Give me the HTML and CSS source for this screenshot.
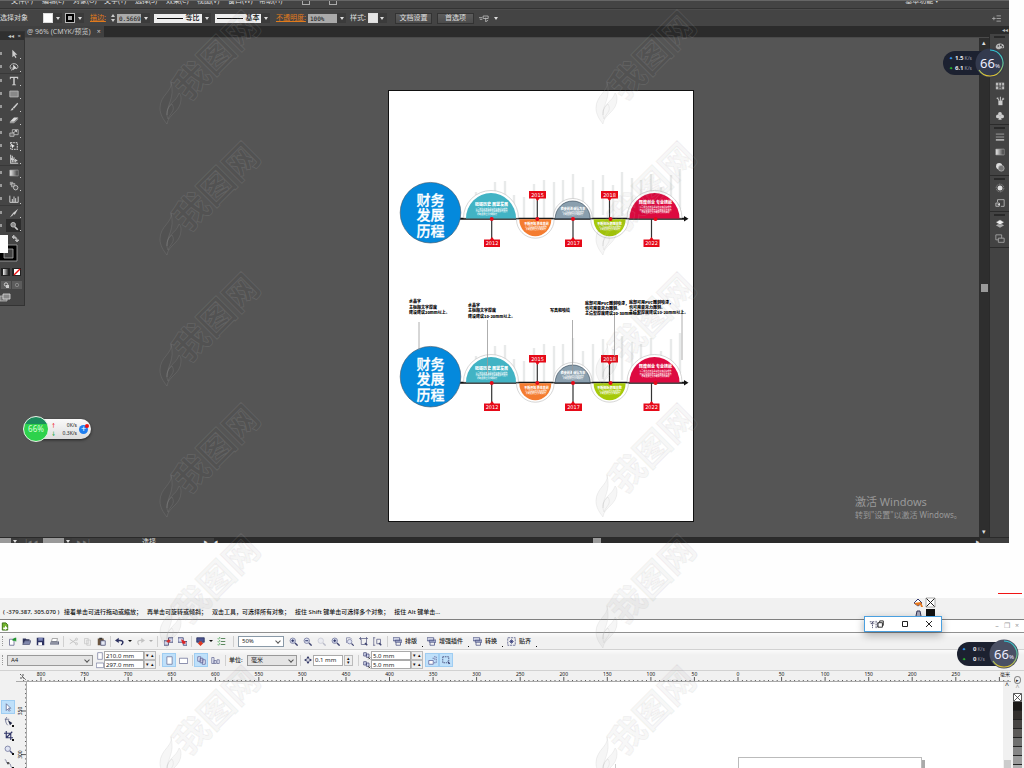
FILE: index.html
```html
<!DOCTYPE html>
<html lang="zh-CN">
<head>
<meta charset="utf-8">
<title>财务发展历程</title>
<link rel="stylesheet" href="styles.css">
</head>
<body>
<svg class="defs" aria-hidden="true">
  <defs>
    <linearGradient id="g-gray"><stop offset="0" stop-color="#eee"/><stop offset="1" stop-color="#333"/></linearGradient>
    <linearGradient id="g-ring" x1="0" y1="0" x2="0" y2="1"><stop offset="0" stop-color="#2fc6d8"/><stop offset=".6" stop-color="#6cc08a"/><stop offset="1" stop-color="#e8c52c"/></linearGradient>
    <symbol id="i-arrow" viewBox="0 0 12 12"><path d="M4 1v9l2-2 2 3 1-1-2-3h3z" fill="#ccc"/></symbol>
    <symbol id="i-lasso" viewBox="0 0 12 12"><path d="M3 9C0 7 1 2 6 2s6 5 3 6M3 7c2-1 2 3 0 3" fill="none" stroke="#bbb" stroke-width="1.2"/><path d="M5 3v7l2-2h3z" fill="#ddd"/></symbol>
    <symbol id="i-type" viewBox="0 0 12 12"><path d="M1 1h10v3h-.8L9.600 2.300H6.900v7.700l1.600.5V11h-5v-.5L5.100 10V2.300H2.400L1.800 4H1z" fill="#ccc"/></symbol>
    <symbol id="i-rect" viewBox="0 0 12 12"><path d="M1 2.500h10v7H1z" fill="#888" stroke="#bbb"/></symbol>
    <symbol id="i-brush" viewBox="0 0 12 12"><path d="M10 1 11 2 6 8 4.500 6.500zM4 7l1.500 1.500C4 11 2 10 1 10c2 0 2-2 3-3z" fill="#ccc"/></symbol>
    <symbol id="i-eraser" viewBox="0 0 12 12"><path d="M1 8 6 3h5L6 8z" fill="#ddd"/><path d="M1 8h5v2H1zM6 8l5-5v2L6 10z" fill="#999"/></symbol>
    <symbol id="i-scale" viewBox="0 0 12 12"><path d="M4 2h7v6H4z" fill="none" stroke="#bbb"/><path d="M1 6h5v4H1z" fill="#666" stroke="#bbb"/><path d="m5 6 4-3M7 3h2v2" stroke="#ddd" fill="none"/></symbol>
    <symbol id="i-free" viewBox="0 0 12 12"><path d="M2 2h8v8H2z" fill="none" stroke="#bbb" stroke-width="1.500" stroke-dasharray="2 1"/><path d="m2 3 5 3-2 1-1 2z" fill="#eee"/></symbol>
    <symbol id="i-persp" viewBox="0 0 12 12"><path d="M2 1v10h9M4 2v8M6 4v6M8 6v4M2 5l8 3" fill="none" stroke="#ccc" stroke-width="1.300"/></symbol>
    <symbol id="i-grad" viewBox="0 0 12 12"><path d="M1 2.500h10v7H1z" fill="url(#g-gray)" stroke="#aaa" stroke-width=".7"/></symbol>
    <symbol id="i-blend" viewBox="0 0 12 12"><path d="M1 1h4v4H1z" fill="#999"/><path d="M3 3h4v4H3z" fill="#777" stroke="#bbb" stroke-width=".8"/><circle cx="8" cy="8" r="2.700" fill="#555" stroke="#ccc"/></symbol>
    <symbol id="i-graph" viewBox="0 0 12 12"><path d="M1 2v8h10V3M4 10V6M6 10V3M8 10V5" fill="none" stroke="#ccc" stroke-width="1.200"/></symbol>
    <symbol id="i-slice" viewBox="0 0 12 12"><path d="M11 1 7 8 4 6.500zM4 7l1.500 1L1 11.500z" fill="#ccc"/></symbol>
    <symbol id="i-zoomt" viewBox="0 0 12 12"><circle cx="5" cy="4.500" r="2.800" fill="#888" stroke="#ccc"/><path d="m7 7 3.500 3.500" stroke="#ccc" stroke-width="2"/></symbol>
    <symbol id="i-color" viewBox="0 0 12 12"><path d="M1 8c-1-6 10-7 10-1 0 3-3 1-4 2s-4 2-6-1z" fill="#bbb"/><circle cx="4" cy="6" r="1" fill="#444"/><circle cx="7" cy="5" r="1.200" fill="#444"/><circle cx="9" cy="7" r="1" fill="#444"/></symbol>
    <symbol id="i-swatch" viewBox="0 0 12 12"><path d="M1 2h10v8H1z" fill="#bbb"/><path d="M1 6h10M4.500 2v8M8 2v8" stroke="#444"/><path d="M5 7h2v2H5z" fill="#555"/></symbol>
    <symbol id="i-pots" viewBox="0 0 12 12"><path d="M4 6h5v5H4z" fill="#ccc"/><path d="M5 6 3 2M6.500 6V1M8 6l2-4M2 3l2-1M9 3l2 1" stroke="#bbb" stroke-width="1.300"/></symbol>
    <symbol id="i-club" viewBox="0 0 12 12"><circle cx="6" cy="3.500" r="2.300" fill="#ccc"/><circle cx="3.500" cy="6.500" r="2.300" fill="#ccc"/><circle cx="8.500" cy="6.500" r="2.300" fill="#ccc"/><path d="M5.300 6h1.400L8 10.500H4z" fill="#ccc"/></symbol>
    <symbol id="i-lines" viewBox="0 0 12 12"><path d="M1 2.500h10M1 6h10" stroke="#aaa"/><path d="M1 9.500h10" stroke="#ccc" stroke-width="1.600"/></symbol>
    <symbol id="i-trans" viewBox="0 0 12 12"><circle cx="5" cy="5" r="3.700" fill="#ddd"/><circle cx="7.500" cy="7.500" r="3.500" fill="#777" stroke="#bbb" stroke-width=".8"/></symbol>
    <symbol id="i-appear" viewBox="0 0 12 12"><circle cx="6" cy="6" r="3" fill="#ddd"/><circle cx="6" cy="6" r="4.600" fill="none" stroke="#aaa" stroke-dasharray="1 1"/></symbol>
    <symbol id="i-style" viewBox="0 0 12 12"><path d="M3 5V2h8v8H7" fill="none" stroke="#bbb"/><path d="M1 6h4v4H1z" fill="#555" stroke="#bbb"/><path d="m3 8 3-2v3z" fill="#ddd"/></symbol>
    <symbol id="i-layers" viewBox="0 0 12 12"><path d="m6 5 5 2.500L6 10.500 1 7.500z" fill="#aaa"/><path d="m6 1 5 3-5 3-5-3z" fill="#eee" stroke="#444" stroke-width=".5"/></symbol>
    <symbol id="i-boards" viewBox="0 0 12 12"><path d="M1 1h7v6H1z" fill="none" stroke="#aaa"/><path d="M4 5h7v5H4z" fill="#444" stroke="#aaa"/></symbol>

    <symbol id="c-new" viewBox="0 0 12 12"><path d="M2 3h6v8H2z" fill="#fff" stroke="#5b5f86"/><path d="M8 3V2m2 3h1M6 4h4V1" stroke="#1c9a2a" stroke-width="2"/></symbol>
    <symbol id="c-open" viewBox="0 0 12 12"><path d="M1 10V2h4l1 1h4v2H4z" fill="#2d3157"/><path d="M4 5h8l-2 5H1z" fill="#8289ad" stroke="#2d3157" stroke-width=".7"/></symbol>
    <symbol id="c-save" viewBox="0 0 12 12"><path d="M1 1h10v10H1z" fill="#2c3160"/><path d="M3 1h6v4H3z" fill="#7c86b8"/><path d="M3 7h5v4H3z" fill="#fff"/></symbol>
    <symbol id="c-print" viewBox="0 0 12 12"><path d="M3 2h7L9 6H2z" fill="#fff" stroke="#666" stroke-width=".7"/><path d="M1 6h11v4H0z" fill="#555b75"/><path d="M1 8h10" stroke="#eee"/></symbol>
    <symbol id="c-cut" viewBox="0 0 12 12"><path d="m1 3 9 6M1 9l9-6" stroke="#c4c4c4" stroke-width="1.300"/><circle cx="10" cy="3" r="1.500" fill="none" stroke="#c4c4c4"/><circle cx="10" cy="9" r="1.500" fill="none" stroke="#c4c4c4"/></symbol>
    <symbol id="c-copy" viewBox="0 0 12 12"><path d="M2 2h5v7H2zM5 4h5v7H5z" fill="#eee" stroke="#c8c8c8"/></symbol>
    <symbol id="c-paste" viewBox="0 0 12 12"><path d="M1 2h8v9H1z" fill="#6b553f"/><path d="M3 1h4v2H3z" fill="#333"/><path d="M5 5h6v6H5z" fill="#e4e8f4" stroke="#444a70"/></symbol>
    <symbol id="c-undo" viewBox="0 0 12 12"><path d="M3 4.500h4c5 0 4 5 1 6" fill="none" stroke="#2c3160" stroke-width="2"/><path d="M0 4.500 5 1v7z" fill="#2c3160"/></symbol>
    <symbol id="c-redo" viewBox="0 0 12 12"><path d="M9 4.500H6c-5 0-4 4-2 6" fill="none" stroke="#c4c4c4" stroke-width="1.500"/><path d="M12 4.500 7 1v7z" fill="#c4c4c4"/></symbol>
    <symbol id="c-import" viewBox="0 0 12 12"><path d="M6 1h6v6H6zM0 5h6v6H0z" fill="#d8dcf0" stroke="#33386a"/><path d="m3 6 3-3 3 2-3 3z" fill="#d22"/></symbol>
    <symbol id="c-export" viewBox="0 0 12 12"><path d="M0 1h7v6H0zM7 6h5v5H7z" fill="#d8dcf0" stroke="#33386a"/><path d="m4 3 6 3v3H6z" fill="#d22"/></symbol>
    <symbol id="c-launch" viewBox="0 0 12 12"><path d="M1 1h10v6H1z" fill="#4c5490" stroke="#222a58"/><path d="M4 6h4v2h2l-4 4-4-4h2z" fill="#e23a22"/></symbol>
    <symbol id="c-list" viewBox="0 0 12 12"><path d="M5 2h6M5 6h6M5 10h6" stroke="#5d8a60" stroke-width="1.500"/><path d="m1 2 1 1 2-3M1 6l1 1 2-3M1 10l1 1 2-3" stroke="#3da048" fill="none"/></symbol>
    <symbol id="c-mag" viewBox="0 0 12 12"><circle cx="5" cy="5" r="3.600" fill="#dfe3f3" stroke="#6a6f96"/><path d="m8 8 3.500 3.500" stroke="#3f4470" stroke-width="1.800"/></symbol>
    <symbol id="c-plus" viewBox="0 0 12 12"><use href="#c-mag"/><path d="M3 5h4M5 3v4" stroke="#222a60" stroke-width="1.300"/></symbol>
    <symbol id="c-minus" viewBox="0 0 12 12"><use href="#c-mag"/><path d="M3 5h4" stroke="#222a60" stroke-width="1.300"/></symbol>
    <symbol id="c-page" viewBox="0 0 12 12"><path d="M2 8V1h5l2 2" fill="none" stroke="#7c80a4"/><use href="#c-mag" x="2" y="2" width="10" height="10"/></symbol>
    <symbol id="c-fit" viewBox="0 0 12 12"><path d="M0 2h12M2 0v4M10 0v4M3 3v7h7V4" fill="none" stroke="#5b5f86"/><path d="m8 8 3 3" stroke="#3f4470" stroke-width="2"/></symbol>
    <symbol id="c-fith" viewBox="0 0 12 12"><path d="M1 1v10M0 1h3M0 11h3M5 3h5v6H5z" fill="none" stroke="#5b5f86"/><path d="m8 8 3 3" stroke="#3f4470" stroke-width="2"/></symbol>
    <symbol id="c-plug" viewBox="0 0 12 12"><path d="M0 1h9v4H0zM3 4h9v3H3z" fill="#b9bfdd" stroke="#4a5080"/><path d="M4 7v4h6V7" fill="none" stroke="#4a5080"/><path d="M1 2.500h7" stroke="#fff"/></symbol>
    <symbol id="c-snap" viewBox="0 0 12 12"><path d="M1 1h10v10H1z" fill="none" stroke="#4a5080" stroke-dasharray="3 1"/><path d="M6 3v6M3 6h6M4 4l4 4M8 4 4 8" stroke="#333a78"/></symbol>
    <symbol id="c-port" viewBox="0 0 12 12"><path d="M2.500 1h7v10h-7z" fill="#fff" stroke="#6a6f96"/></symbol>
    <symbol id="c-land" viewBox="0 0 12 12"><path d="M.5 3h11v7H.5z" fill="#fff" stroke="#6a6f96"/></symbol>
    <symbol id="c-pages" viewBox="0 0 12 12"><path d="M1 1h4v6H1zM4 3h4v6H4zM7 5h4v6H7z" fill="#e9ecf8" stroke="#5b5f96"/></symbol>
    <symbol id="c-cur" viewBox="0 0 12 12"><path d="M1 2h3v8H1zM4 6h3v4H4zM8 5h3v5H8z" fill="#e9ecf8" stroke="#6a6f96"/></symbol>
    <symbol id="c-nudge" viewBox="0 0 12 12"><path d="m6 0 2 3H4zM6 12 4 9h4zM0 6l3-2v4zM12 6 9 8V4z" fill="#2c3160"/><path d="M4 4h4v4H4z" fill="#fff" stroke="#2c3160"/></symbol>
    <symbol id="c-dup" viewBox="0 0 12 12"><path d="M1 1h4v5H1zM5 3h4v5H5z" fill="#d8dcf0" stroke="#33386a"/><path d="m8 8 3 3m0-3-3 3" stroke="#222"/></symbol>
    <symbol id="c-treat" viewBox="0 0 12 12"><path d="M1 6h6v5H1z" fill="#fff" stroke="#5b5f96"/><path d="M6 3h3v3M8 1h3v8H8" fill="none" stroke="#5b5f96" stroke-dasharray="2 1"/></symbol>
    <symbol id="c-sel" viewBox="0 0 12 12"><path d="M1 1h8v8H1z" fill="none" stroke="#33386a" stroke-dasharray="2 1"/><path d="m7 6 4 4-2 1z" fill="#33386a"/></symbol>
    <symbol id="c-pick" viewBox="0 0 12 12"><path d="M3 1v9l2-2 2 3 1-1-2-3h3z" fill="#fff" stroke="#4a5080" stroke-width=".9"/></symbol>
    <symbol id="c-shape" viewBox="0 0 12 12"><path d="M4 0C1 3 2 8 5 11M1 3h6" fill="none" stroke="#555b80"/><path d="m5 4 6 4-3 3z" fill="#222848"/></symbol>
    <symbol id="c-crop" viewBox="0 0 12 12"><path d="M3 0v9h9M0 3h9v9M3 9l8-8" fill="none" stroke="#33386a" stroke-width="1.500"/></symbol>
    <symbol id="c-free" viewBox="0 0 12 12"><path d="M1 1c4 0 0 5 5 5s1 5 5 5" fill="none" stroke="#666a8a"/><path d="M4 4h3v3H4z" fill="#555"/></symbol>

    <g id="timeline">
      <g fill="none" stroke="#e8eaea" stroke-width="2.400">
        <path d="M476 192v26M485 191v27M495 182v30M505 181v32M514 195v23M524 197v21M534 184v34M544 180v38M554 182v34M563 180v36M573 174v30M583 187v31M593 180v38M603 175v40M613 185v33M622 172v44M632 178v38M641 180v32M651 174v30M661 187v25M671 175v28M680 169v40"/>
      </g>
      <path d="M460 218.700h226" stroke="#111" stroke-width="2"/><path d="m684 216 4.500 2.700-4.500 2.700z" fill="#111"/>
      <circle cx="430.500" cy="212.700" r="30.300" fill="#0489dc" stroke="#456" stroke-width=".6"/>
      <g fill="#fff" stroke="#bbb" stroke-width=".6">
        <path d="M463.500 218a27.500 27.500 0 0 1 55 0z"/><path d="M516.500 219.400a18.800 18.800 0 0 0 37.600 0z"/><path d="M553.200 218a19.500 19.500 0 0 1 39 0z"/><path d="M590.800 219.400a18.800 18.800 0 0 0 37.600 0z"/><path d="M627 218a27.500 27.500 0 0 1 55 0z"/>
      </g>
      <path d="M466 218.500a25 25.500 0 0 1 50 0z" fill="#42b3c4"/>
      <path d="M519.300 219.300a16 17 0 0 0 32 0z" fill="#f47c30"/>
      <path d="M555.200 218.500a17.500 17.500 0 0 1 35 0z" fill="#8a9fae" stroke="#345" stroke-width=".6"/>
      <path d="M593.600 219.300a16 17 0 0 0 32 0z" fill="#a6c90a"/>
      <path d="M629.500 218.500a25 25.500 0 0 1 50 0z" fill="#dd0a40"/>
      <path d="M491.700 219v20M537.300 199v20M573 219v20M609.500 199v20M651.500 219v20" stroke="#333" stroke-width="1.200"/>
      <g fill="#e60a18">
        <circle cx="491.700" cy="219" r="2"/><circle cx="537.300" cy="219" r="2"/><circle cx="573" cy="219" r="2"/><circle cx="610.500" cy="219" r="2"/><circle cx="655.500" cy="219" r="2"/>
        <path d="M484 239.500h6l2-2.500 2 2.500h6v7.500h-16zM565 239.500h6l2-2.500 2 2.500h7v7.500h-17zM643.500 239.500h6l2-2.500 2 2.500h6v7.500h-16zM529 191h17v7.500h-6.500l-2 2.500-2-2.500H529zM601 191h17v7.500h-6.500l-2 2.500-2-2.500H601z"/>
      </g>
      <g class="t-title"><text x="430.500" y="204.500">财务</text><text x="430.500" y="220">发展</text><text x="430.500" y="235.500">历程</text></g>
      <g class="t-year"><text x="492" y="245">2012</text><text x="573.500" y="245">2017</text><text x="651.500" y="245">2022</text><text x="537.500" y="196.700">2015</text><text x="609.500" y="196.700">2018</text></g>
      <g class="t-head"><text x="491.500" y="206">砥砺历史 展望发展</text><text x="655.500" y="204">辉煌创业 专业铸就</text></g>
      <g class="t-head t-head-small"><text x="536.500" y="224.500">不断开拓 勇往直前</text><text x="573" y="209.500">稳步前进 诚信为本</text><text x="609.500" y="224.500">不断创新 超越自我</text></g>
      <g class="t-body">
        <text x="491.500" y="209.500">公司成立之初秉承诚信务实经营理念</text><text x="491.500" y="212">为客户提供优质专业高效服务与支持</text><text x="487" y="214.500">不断发展壮大不断前行</text>
        <text x="655.500" y="208">公司成立之初秉承诚信务实经营理念</text><text x="655.500" y="210.500">为客户提供优质专业高效服务与支持</text><text x="655.500" y="213">不断发展壮大不断前行共创美好</text>
        <text x="536" y="227.500">公司秉承诚信务实的理念</text><text x="536" y="230">不断发展壮大不断前行</text>
        <text x="573" y="212.500">公司秉承诚信务实的理念</text><text x="573" y="215">不断发展壮大不断前行</text>
        <text x="610" y="227.500">公司秉承诚信务实的理念</text><text x="610" y="230">不断发展壮大不断前行</text>
      </g>
    </g>
    <g id="mark">
      <path d="M171 82c2 9-11 13-11 26 0 6 3 11 7 16 1-10 14-12 14-25 0-4-1-5-2-6-3 10-12 9-12 22 0-12 8-16 4-33zM172 104c-6 5-6 10-4 15 2-6 8-8 4-15z"/>
      <text transform="translate(217 56) rotate(-45)" dy="12">我图网</text>
    </g>
  </defs>
</svg>

<section class="ai">
  <nav class="ai-menu"><span>文件(F)</span><span>编辑(E)</span><span>对象(O)</span><span>文字(T)</span><span>选择(S)</span><span>效果(C)</span><span>视图(V)</span><span>窗口(W)</span><span>帮助(H)</span><i class="mini"></i><i class="mini"></i><span class="ai-menu-right">基本功能 ▾</span></nav>
  <div class="ai-control">
    <span class="lbl-first">选择对象</span>
    <button class="well" aria-label="填色"></button><i class="dd"></i>
    <button class="well well-stroke" aria-label="描边颜色"></button><i class="dd"></i>
    <label class="hot" for="sw">描边:</label><i class="updown"></i><input id="sw" class="num" value="0.5669"><i class="dd"></i>
    <button class="profile"><b></b>等比</button><i class="dd"></i>
    <button class="profile profile-b"><b></b>基本</button><i class="dd"></i>
    <label class="hot hot-op" for="op">不透明度:</label><input id="op" class="num num-op" value="100%"><i class="dd"></i>
    <span class="style-lbl">样式:</span><button class="well well-style" aria-label="样式"></button><i class="dd"></i>
    <button class="btn">文档设置</button><button class="btn">首选项</button>
    <svg class="sel-ic" viewBox="0 0 12 8"><path d="M0 3h4M1 5h3M5 1h6v3H5zM8 3v5l3-2" stroke="#bbb" fill="none"/></svg><i class="dd bare"></i>
    <svg class="menu-ic" viewBox="0 0 10 8"><path d="M0 4h4M2 2v4M5 1h5M5 4h5M5 7h5" stroke="#aaa" fill="none"/></svg>
  </div>
  <div class="ai-tabs"><div class="tab"><span>@ 96% (CMYK/预览)</span><button aria-label="关闭">×</button></div><span class="collapse">◂◂</span></div>
  <div class="ai-main">
    <div class="canvas">
      <svg class="artboard" viewBox="389 91 304 430" role="img" aria-label="财务发展历程">
        <use href="#timeline"/>
        <use href="#timeline" y="164"/>
        <path d="M419 322v28M487.500 320v54M572.500 320v54M614.500 314v42M682 310v50" stroke="#999" stroke-width=".8"/>
        <g class="note">
          <text x="409" y="303">水晶字</text><text x="409" y="308.500">主标题文字厚度</text><text x="409" y="314">建设建议20mm以上。</text>
          <text x="468" y="306.500">水晶字</text><text x="468" y="312">主标题文字厚度</text><text x="468" y="317.500">建设建议10-20mm以上。</text>
          <text x="550" y="312">写真和喷绘</text>
          <text x="585" y="305">底部可用PVC雕刻喷漆，</text><text x="585" y="310">也可用亚克力雕刻。</text><text x="585" y="315">主造型厚度建议20-30mm以上。</text>
          <text x="629" y="303.500">底部可用PVC雕刻喷漆，</text><text x="629" y="308.500">也可用亚克力雕刻。</text><text x="629" y="313.500">主造型厚度建议10-20mm以上。</text>
        </g>
      </svg>
      <p class="activate"><strong>激活 Windows</strong><span>转到"设置"以激活 Windows。</span></p>
      <div class="ball">
        <div class="ball-rate"><span><i class="up">↑</i>0K/s</span><span><i class="down">↓</i>0.3K/s</span></div>
        <button class="ball-plus" aria-label="加速">+</button>
        <b class="ball-pct">66%</b>
      </div>
      <aside class="tools">
        <header><span>◂◂</span><span>×</span></header>
        <div class="tool-list">
          <button aria-label="直接选择"><svg><use href="#i-arrow"/></svg></button>
          <button aria-label="套索"><svg><use href="#i-lasso"/></svg></button><hr>
          <button aria-label="文字"><svg><use href="#i-type"/></svg></button>
          <button aria-label="矩形"><svg><use href="#i-rect"/></svg></button>
          <button aria-label="画笔"><svg><use href="#i-brush"/></svg></button>
          <button aria-label="橡皮擦"><svg><use href="#i-eraser"/></svg></button>
          <button aria-label="比例缩放"><svg><use href="#i-scale"/></svg></button>
          <button aria-label="自由变换"><svg><use href="#i-free"/></svg></button>
          <button aria-label="透视网格"><svg><use href="#i-persp"/></svg></button><hr>
          <button aria-label="渐变"><svg><use href="#i-grad"/></svg></button>
          <button aria-label="混合"><svg><use href="#i-blend"/></svg></button>
          <button aria-label="图表"><svg><use href="#i-graph"/></svg></button><hr>
          <button aria-label="切片"><svg><use href="#i-slice"/></svg></button>
          <button class="on" aria-label="缩放"><svg><use href="#i-zoomt"/></svg></button>
        </div>
        <svg class="fillstroke" viewBox="0 0 24 72">
          <path d="M13 4c3-1 4 1 4 3M12 4l2-2v4zM17 9l-2-2h4z" stroke="#bbb" fill="#bbb" stroke-width=".8"/>
          <path d="M-1 12h18v16H-1z" fill="#000" stroke="#aaa" stroke-width=".8"/><path d="M4 16h9v9H4z" fill="#444" stroke="#aaa" stroke-width=".8"/><path d="M-1 2h9v18h-9z" fill="#fff"/>
          <path d="M1 35h9v8H1z" fill="#222"/><path d="M3 36h5v6H3z" fill="url(#g-gray)"/><path d="M12 35h9v8h-9z" fill="#222"/><path d="M14 36h6v6h-6z" fill="#fff"/><path d="m14 42 6-6" stroke="#e11" stroke-width="1.500"/>
          <path d="M1 48h10v8H1zM12 48h10v8H12z" fill="#5c5c5c"/><circle cx="6" cy="51.500" r="1.700" fill="none" stroke="#ccc"/><path d="M6 52h3v3H6z" fill="#ccc"/><circle cx="17" cy="52" r="1.700" fill="none" stroke="#888"/>
          <path d="M0 63h7v5H0z" fill="#777" stroke="#bbb" stroke-width=".8"/><path d="M3 61h7v5H3z" fill="#888" stroke="#ddd" stroke-width=".8"/>
        </svg>
      </aside>
    </div>
    <div class="vscroll"><span>▴</span><i></i><span>▾</span></div>
    <aside class="dock">
      <div class="dock-g"><svg class="tall"><use href="#i-color"/></svg><svg><use href="#i-swatch"/></svg><svg><use href="#i-pots"/></svg><svg><use href="#i-club"/></svg></div>
      <div class="dock-g"><svg><use href="#i-lines"/></svg><svg><use href="#i-grad"/></svg><svg><use href="#i-trans"/></svg></div>
      <div class="dock-g"><svg><use href="#i-appear"/></svg><svg><use href="#i-style"/></svg></div>
      <div class="dock-g"><svg><use href="#i-layers"/></svg><svg><use href="#i-boards"/></svg></div>
    </aside>
    <div class="meter"><div class="meter-rate"><span><i class="blue">✦</i><b>1.5</b>K/s</span><span><i class="green">✦</i><b>6.1</b>K/s</span></div><div class="meter-dial"><svg viewBox="0 0 30 30"><circle cx="15" cy="15" r="14.500" fill="#333a4e"/><path d="M15 2a13 13 0 1 1-11 20" fill="none" stroke="url(#g-ring)" stroke-width="1.200"/></svg><strong>66<small>%</small></strong></div></div>
  </div>
  <footer class="ai-status"><i class="box"></i><i class="dd"></i><span class="nav">|◂ ◂</span><i class="box box-w"></i><i class="dd"></i><span class="nav">▸ ▸|</span><span class="st-sel">选择</span><span class="st-r">▸</span><span class="hbar">◂<i></i><span>▸</span></span></footer>
</section>

<div class="between"><i></i></div>

<section class="cd">
  <div class="cd-hint"><span class="pos">( -379.387, 305.070 )</span><span>接着单击可进行拖动或缩放；</span><span>再单击可旋转或倾斜；</span><span>双击工具，可选择所有对象；</span><span>按住 Shift 键单击可选择多个对象；</span><span>按住 Alt 键单击...</span>
    <svg class="hint-ic" viewBox="0 0 24 22"><path d="m2 6 4-4 4 4-4 3z" fill="#fff" stroke="#333a70"/><path d="m2 6 7-1 2 5H9L8 7 6 9z" fill="#e8781c"/><path d="M14 1h9v9h-9z" fill="#fff" stroke="#888" stroke-width=".7"/><path d="m14.500 1.500 8 8m0-8-8 8" stroke="#222"/><path d="M14 12h9v9h-9z" fill="#111"/><path d="M5 14h3l1 5v3H4v-3z" fill="#aab" stroke="#335"/></svg>
  </div>
  <div class="cd-title"><svg class="doc-ic" viewBox="0 0 8 10"><path d="M1 1h4l2 2v6H1z" fill="#72b52c" stroke="#356b12"/><path d="M2 6h2V4l3 3-3 2V8H2z" fill="#fff"/></svg><span class="wc">–</span><span class="wc">❐</span><span class="wc">×</span></div>
  <div class="cd-bar">
    <i class="grip"></i>
    <button aria-label="新建"><svg><use href="#c-new"/></svg></button><button aria-label="打开"><svg><use href="#c-open"/></svg></button><button aria-label="保存"><svg><use href="#c-save"/></svg></button><button aria-label="打印"><svg><use href="#c-print"/></svg></button><i class="sep w5"></i>
    <button aria-label="剪切"><svg><use href="#c-cut"/></svg></button><button aria-label="复制"><svg><use href="#c-copy"/></svg></button><button aria-label="粘贴"><svg><use href="#c-paste"/></svg></button><i class="sep w4"></i>
    <button aria-label="撤销"><svg><use href="#c-undo"/></svg></button><i class="car"></i><button aria-label="重做"><svg><use href="#c-redo"/></svg></button><i class="car dim"></i><i class="sep w7"></i>
    <button aria-label="导入"><svg><use href="#c-import"/></svg></button><button aria-label="导出"><svg><use href="#c-export"/></svg></button><i class="sep w4"></i>
    <button aria-label="启动"><svg><use href="#c-launch"/></svg></button><i class="car"></i><button aria-label="选项"><svg><use href="#c-list"/></svg></button><i class="sep w10"></i>
    <span class="pick pick-zoom"><select aria-label="缩放级别"><option>50%</option></select></span><i class="w2"></i>
    <button aria-label="放大"><svg><use href="#c-plus"/></svg></button><button aria-label="缩小"><svg><use href="#c-minus"/></svg></button><button class="faint" aria-label="选定"><svg><use href="#c-mag"/></svg></button><button aria-label="全部"><svg><use href="#c-plus"/></svg></button><button aria-label="页面"><svg><use href="#c-page"/></svg></button><button aria-label="页宽"><svg><use href="#c-fit"/></svg></button><button aria-label="页高"><svg><use href="#c-fith"/></svg></button><i class="sep w6"></i>
    <button class="txt"><svg><use href="#c-plug"/></svg>排版</button><button class="txt wide"><svg><use href="#c-plug"/></svg>增强插件</button><button class="txt"><svg><use href="#c-plug"/></svg>转换</button><button class="txt"><svg><use href="#c-snap"/></svg>贴齐</button>
  </div>
  <div class="cd-bar cd-props">
    <i class="grip"></i>
    <span class="pick pick-page"><select aria-label="纸张"><option>A4</option></select></span>
    <div class="pair"><label><svg><use href="#c-port"/></svg><input value="210.0 mm"><i class="spin">▾ ▴</i></label><label><svg><use href="#c-land"/></svg><input value="297.0 mm"><i class="spin">▾ ▴</i></label></div><i class="sep w6"></i>
    <button class="on" aria-label="纵向"><svg><use href="#c-port"/></svg></button><button aria-label="横向"><svg><use href="#c-land"/></svg></button><i class="sep w4"></i>
    <button class="on" aria-label="所有页"><svg><use href="#c-pages"/></svg></button><button aria-label="当前页"><svg><use href="#c-cur"/></svg></button><i class="sep w7"></i>
    <label class="unit" for="unit">单位:</label><span class="pick pick-unit"><select id="unit"><option>毫米</option></select></span><i class="sep w7"></i>
    <div class="pair nudge"><label><svg><use href="#c-nudge"/></svg><input value="0.1 mm"><i class="spin tall">▴<br>▾</i></label></div><i class="sep w10"></i>
    <div class="pair"><label><svg><use href="#c-dup"/></svg><input value="5.0 mm"><i class="spin">▾ ▴</i></label><label><svg><use href="#c-dup"/></svg><input value="5.0 mm"><i class="spin">▾ ▴</i></label></div><i class="w2"></i>
    <button class="on" aria-label="填充处理"><svg><use href="#c-treat"/></svg></button><button class="on" aria-label="选取"><svg><use href="#c-sel"/></svg></button>
  </div>
  <div class="cd-work">
    <div class="cd-tools"><button class="on" aria-label="挑选"><svg><use href="#c-pick"/></svg></button><button aria-label="形状"><svg><use href="#c-shape"/></svg></button><button aria-label="裁剪"><svg><use href="#c-crop"/></svg></button><button aria-label="缩放工具"><svg><use href="#c-mag"/></svg></button><button aria-label="手绘"><svg><use href="#c-free"/></svg></button></div>
    <div class="cd-view">
      <svg class="ruler-h" id="rulerH"></svg>
      <div class="cd-rest"><svg class="ruler-v" id="rulerV"></svg><div class="cd-canvas"><div class="page"></div><i class="stub"></i></div><div class="cd-scroll"><span>^</span><i></i></div></div>
    </div>
    <div class="palette"><span class="pal-play">▸</span><span class="pal-up">^</span><svg viewBox="0 0 9 9"><path d="M.5.500h8v8h-8zM1 1l7 7M8 1 1 8" fill="#fff" stroke="#333" stroke-width=".8"/></svg><i class="k1"></i><i class="k2"></i><i class="k3"></i><i class="k4"></i><i class="k5"></i><i class="k6"></i><i class="k7"></i><i class="k8"></i></div>
  </div>
  <div class="popup"><svg viewBox="0 0 16 10"><path d="M0 2h6M3 2v7M1 4h4M7 1v8M9 3v6" stroke="#446" fill="none" stroke-dasharray="2 1"/><path d="M9 3h5v5H9zM11 3V1h4v5h-1" fill="none" stroke="#222"/></svg><button aria-label="最大化"><svg viewBox="0 0 8 8"><path d="M1.500 1.500h5v5h-5z" fill="none" stroke="#222"/></svg></button><button aria-label="关闭窗口"><svg viewBox="0 0 8 8"><path d="m1 1 6 6M7 1 1 7" stroke="#222"/></svg></button></div>
  <div class="meter meter-b"><div class="meter-rate"><span><i class="blue">✦</i><b>0</b>K/s</span><span><i class="green">✦</i><b>0</b>K/s</span></div><div class="meter-dial"><svg viewBox="0 0 30 30"><circle cx="15" cy="15" r="14.500" fill="#4a5064"/><path d="M15 2a13 13 0 1 1-11 20" fill="none" stroke="url(#g-ring)" stroke-width="1.200"/></svg><strong>66<small>%</small></strong></div></div>
</section>
<svg class="marks" id="marks" aria-hidden="true"></svg>
<script src="app.js"></script>
</body>
</html>
```
FILE: styles.css
```css
* { box-sizing: border-box; }
html, body { height: 100%; }
body {
  margin: 0; display: flex; flex-direction: column; position: relative; overflow: hidden;
  background: #fefefe; color: #222;
  font-family: "Noto Sans", "Noto Sans CJK SC", sans-serif; font-size: 7px; line-height: 8px;
}
button, input, select { font: inherit; color: inherit; margin: 0; padding: 0; border: 0; background: none; border-radius: 0; min-width: 0; }
button { display: flex; align-items: center; justify-content: center; }
i { font-style: normal; }
.defs { position: absolute; width: 0; height: 0; }

/* Vector editor */
.ai { flex: 543 1 0; min-height: 0; margin-right: 15px; display: flex; flex-direction: column; background: #444; color: #ddd; position: relative; }
.ai-menu { height: 9px; flex: none; overflow: hidden; display: flex; align-items: flex-end; gap: 7px; padding: 0 70px 3px 11px; font-size: 7px; line-height: 9px; border-top: 1px solid #666; border-bottom: 1px solid #333; }
.ai-menu span { width: 24px; white-space: nowrap; flex: none; }
.mini { width: 8px; height: 8px; border: 1px solid #aaa; margin-left: 12px; }
.ai-menu .ai-menu-right { margin-left: auto; width: auto; }
.ai-control { height: 17px; flex: none; display: flex; align-items: center; border-top: 1px solid #4c4c4c; white-space: nowrap; padding-right: 8px; }
.lbl-first { width: 43px; }
.well { width: 10px; height: 10px; background: #fff; border: 1px solid #ddd; flex: none; }
.well-stroke { border: 3px solid #000; background: #aaa; outline: 1px solid #bbb; outline-offset: -1px; margin-left: 3px; }
.well-style { background: #e4e4e4; margin-left: 2px; }
.dd { width: 9px; height: 10px; flex: none; background: #3b3b3b; display: flex; align-items: center; justify-content: center; }
.dd::before { content: ""; border: 2px solid transparent; border-top: 3px solid #ddd; border-bottom: 0; }
.dd.bare { background: none; margin-left: 3px; }
.hot { color: #e07b1c; text-decoration: underline; margin-left: 6px; width: 18px; flex: none; }
.hot-op { width: 32px; }
.updown { width: 6px; height: 8px; margin: 0 1px 0 2px; display: flex; flex-direction: column; justify-content: space-between; align-items: center; }
.updown::before { content: ""; border: 2px solid transparent; border-bottom: 3px solid #ccc; border-top: 0; }
.updown::after { content: ""; border: 2px solid transparent; border-top: 3px solid #ccc; border-bottom: 0; }
.num { width: 24px; height: 9px; background: #aaa; color: #111; font-family: "DejaVu Sans Mono", monospace; font-size: 6px; padding-left: 2px; }
.num-op { width: 29px; }
.profile { width: 48px; height: 9px; background: #eee; color: #111; gap: 3px; margin-left: 4px; font-weight: 500; }
.profile b { width: 26px; height: 1px; background: #111; }
.profile-b { width: 46px; }
.style-lbl { margin-left: 4px; }
.btn { width: 37px; height: 11px; border: 1px solid #333; background: linear-gradient(#5c5c5c, #4c4c4c); margin-left: 5px; }
.well-style + .dd + .btn { margin-left: 8px; }
.sel-ic { width: 10px; height: 7px; margin-left: 5px; }
.menu-ic { width: 9px; height: 7px; margin-left: auto; }
.ai-tabs { height: 12px; flex: none; background: #2b2b2b; display: flex; justify-content: space-between; border-bottom: 1px solid #4a4a4a; }
.tab { width: 104px; background: #404040; display: flex; align-items: center; padding-left: 27px; gap: 6px; white-space: nowrap; color: #c8c8c8; }
.collapse { color: #bbb; font-size: 6px; line-height: 8px; padding-right: 1px; }
.ai-main { flex: 1; min-height: 0; display: flex; position: relative; }
.canvas { flex: 1; min-width: 0; background: #555; position: relative; }
.artboard { position: absolute; left: 388px; top: 52px; width: 306px; height: 432px; background: #fff; border: 1px solid #111; }
.t-title { font: 500 14px "Noto Sans CJK SC", sans-serif; fill: #fff; stroke: #fff; stroke-width: .3; text-anchor: middle; }
.t-year { font: 400 5px "DejaVu Sans", sans-serif; fill: #fff; text-anchor: middle; }
.t-head { font: 900 4px "Noto Sans CJK SC", sans-serif; fill: #fff; text-anchor: middle; }
.t-head-small { font-size: 3px; }
.t-body { font: 500 2px "Noto Sans CJK SC", sans-serif; fill: #fff; text-anchor: middle; }
.note { font: 900 4px "Noto Sans CJK SC", sans-serif; fill: #000; }
.activate { position: absolute; right: 18px; bottom: 16px; margin: 0; width: 106px; color: #999; display: flex; flex-direction: column; white-space: nowrap; font-size: 8px; line-height: 12px; }
.activate strong { font-weight: 400; font-size: 11px; line-height: 14px; }

.ball { position: absolute; left: 25px; top: 381px; width: 66px; height: 20px; border-radius: 10px; background: linear-gradient(#fafafa, #ddd); box-shadow: 0 1px 3px #222; display: flex; align-items: center; padding-left: 26px; color: #222; font-size: 5px; }
.ball-rate { width: 26px; }
.ball-rate span { display: flex; justify-content: space-between; }
.ball .up { color: #e22; font-weight: 700; } .ball .down { color: #1a4; font-weight: 700; }
.ball-plus { width: 9px; height: 9px; border-radius: 50%; background: #1e7ef0; color: #fff; font-size: 9px; margin-left: 2px; position: relative; }
.ball-plus::after { content: ""; position: absolute; right: -1px; top: -1px; width: 4px; height: 4px; border-radius: 50%; background: #e11; }
.ball-pct { position: absolute; left: -2px; top: -3px; width: 26px; height: 26px; border-radius: 50%; border: 1px solid #e8f5e8; background: linear-gradient(#1c8a5c 30%, #2ed24c 31%); color: #d4ffd6; font-weight: 400; font-size: 8px; line-height: 24px; text-align: center; }

.tools { position: absolute; left: 0; top: -7px; width: 25px; background: #454545; border: 1px solid #333; border-left: 0; color: #ccc; }
.tools header { height: 8px; background: #2f2f2f; display: flex; justify-content: flex-end; gap: 4px; padding-right: 3px; font-size: 6px; }
.tool-list { border-top: 3px solid #454545; margin-top: 4px; padding-left: 6px; }
.tool-list button { width: 15px; height: 13px; position: relative; }
.tool-list button::after { content: ""; position: absolute; right: 0; bottom: 1px; width: 1px; height: 1px; background: #ccc; }
.tool-list button::before { content: ""; position: absolute; left: -6px; top: 5px; width: 2px; height: 3px; background: #999; }
.tool-list svg { width: 10px; height: 10px; }
.tool-list .on { background: #2d2d2d; }
.tools hr { border: 0; height: 1px; margin: 0 3px 0 -6px; background: #383838; }
.fillstroke { display: block; width: 24px; height: 72px; margin-top: 1px; }

.vscroll { width: 10px; background: #2e2e2e; display: flex; flex-direction: column; justify-content: space-between; align-items: center; color: #ddd; font-size: 7px; line-height: 10px; }
.vscroll i { width: 7px; height: 8px; background: #999; }
.dock { width: 20px; background: #434343; border-left: 1px solid #2a2a2a; margin-top: -4px; }
.dock-g { display: flex; flex-direction: column; align-items: center; border-bottom: 1px solid #2b2b2b; }
.dock-g::before { content: ""; width: 11px; height: 2px; background: #292929; margin: 2px 0 1px; }
.dock-g svg { width: 10px; height: 10px; margin: 2px 0 3px; }
.dock-g svg.tall { margin-bottom: 28px; }

.meter { position: absolute; right: 3px; top: 10px; width: 63px; height: 30px; display: flex; align-items: center; color: #99a; }
.meter-rate { width: 48px; height: 24px; border-radius: 12px 0 0 12px; background: #1c2130; margin-right: -16px; padding: 2px 0 2px 6px; display: flex; flex-direction: column; justify-content: space-around; font-size: 5px; }
.meter-rate span { display: flex; gap: 1px; align-items: center; }
.meter-rate i { width: 5px; } .meter-rate b { font-size: 6px; color: #e8e8ee; }
.meter .blue { color: #3aa8ff; } .meter .green { color: #2bc02b; }
.meter-dial { width: 30px; height: 30px; position: relative; flex: none; }
.meter-dial svg { display: block; }
.meter-dial strong { position: absolute; inset: 0; text-align: center; font-weight: 400; color: #eef; font-size: 13px; line-height: 30px; }
.meter-dial small { font-size: 6px; }

.ai-status { height: 6px; flex: none; overflow: hidden; display: flex; align-items: flex-start; background: #3e3e3e; border-top: 1px solid #2a2a2a; font-size: 7px; line-height: 8px; }
.ai-status .dd { width: 8px; height: 6px; }
.box { width: 11px; height: 6px; background: #999; } .box-w { width: 21px; }
.nav { width: 24px; color: #777; text-align: center; white-space: nowrap; }
.st-sel { margin-left: 46px; } .st-r { margin-left: 48px; }
.hbar { flex: 1; margin-left: 6px; margin-right: 29px; background: #2b2b2b; display: flex; justify-content: space-between; height: 6px; }
.hbar i { width: 8px; height: 5px; background: #999; }

.between { height: 55px; flex: none; display: flex; justify-content: flex-end; align-items: flex-end; padding: 0 2px 4px; }
.between i { width: 24px; height: 1px; background: #f01414; }

/* Drawing suite */
.cd { flex: 170 1 0; min-height: 0; display: flex; flex-direction: column; position: relative; background: #f1f1f1; }
.cd-hint { height: 21px; flex: none; display: flex; align-items: flex-end; gap: 5px; padding: 0 88px 3px 3px; white-space: nowrap; font-size: 6px; line-height: 8px; font-weight: 500; color: #111; }
.cd-hint .pos { font-size: 6px; width: 56px; }
.hint-ic { width: 24px; height: 22px; margin: 0 0 -3px auto; }
.cd-title { height: 14px; flex: none; background: #fff; border-top: 1px solid #808080; border-bottom: 1px solid #909090; display: flex; align-items: center; gap: 4px; padding: 0 4px 0 1px; color: #999; }
.doc-ic { width: 8px; height: 9px; margin-right: auto; }
.wc { width: 6px; text-align: center; }
.cd-bar { height: 17px; flex: none; display: flex; align-items: center; border-bottom: 1px solid #d2d2d2; background: linear-gradient(#fbfbfb, #f1f1f1 5px); white-space: nowrap; }
.cd-bar.cd-props { height: 21px; }
.grip { width: 1px; height: 10px; border-left: 1px dotted #999; margin: 0 2px; }
.cd-bar button { width: 14px; height: 14px; flex: none; }
.cd-bar svg { width: 9px; height: 9px; flex: none; }
.cd-bar .on, .cd-tools .on { background: #bfe0fa; border: 1px solid #9fcdf2; }
.cd-bar .faint { opacity: .3; }
.cd-bar .txt { width: 34px; justify-content: flex-start; padding-left: 3px; gap: 3px; font-size: 6px; font-weight: 500; position: relative; }
.cd-bar .txt.wide { width: 46px; }
.cd-bar .txt::after { content: ""; position: absolute; right: 1px; bottom: 1px; width: 1px; height: 1px; background: #111; }
.sep { height: 11px; background: linear-gradient(#d0d0d0, #d0d0d0) center / 1px 100% no-repeat; flex: none; }
.w2 { width: 2px; } .w4 { width: 4px; } .w5 { width: 5px; } .w6 { width: 6px; } .w7 { width: 7px; } .w10 { width: 10px; }
.car { width: 7px; display: flex; justify-content: center; }
.car::before { content: ""; border: 2px solid transparent; border-top: 2px solid #111; border-bottom: 0; }
.car.dim { opacity: .3; }
.pick { position: relative; display: block; flex: none; height: 11px; }
.pick select { appearance: none; display: block; width: 100%; height: 100%; border: 1px solid #999; background: #e4e4e4; padding-left: 3px; font-size: 6px; line-height: 8px; }
.pick::after { content: ""; position: absolute; right: 4px; top: 3px; width: 3px; height: 3px; border: solid #555; border-width: 0 1px 1px 0; transform: rotate(45deg); }
.pick-zoom { width: 46px; } .pick-zoom select { background: #fff; border-color: #8a9aa8; }
.pick-page { width: 86px; margin: 0 3px 0 2px; } .pick-unit { width: 50px; }
.unit { width: 18px; font-size: 6px; font-weight: 500; }
.pair { display: flex; flex-direction: column; }
.pair label { display: flex; align-items: center; height: 9px; }
.pair svg { width: 8px; height: 8px; }
.pair input { width: 40px; height: 9px; border: 1px solid #aaa; background: #fff; font-size: 6px; padding-left: 1px; }
.spin { width: 12px; height: 9px; background: #eee; border: 1px solid #bbb; font-size: 5px; line-height: 7px; text-align: center; color: #111; }
.nudge label { height: 11px; gap: 1px; }
.nudge input { width: 30px; height: 11px; }
.spin.tall { width: 9px; height: 11px; line-height: 4px; }
.cd-work { flex: 1; min-height: 0; display: flex; }
.cd-tools { width: 16px; flex: none; padding: 29px 1px 0; display: flex; flex-direction: column; }
.cd-tools button { width: 14px; height: 14px; flex: none; position: relative; }
.cd-tools button:not(.on)::after { content: ""; position: absolute; right: 1px; bottom: 1px; border: 1px solid #111; }
.cd-tools svg { width: 9px; height: 9px; }
.cd-view { flex: 1; min-width: 0; display: flex; flex-direction: column; }
.ruler-h { width: 100%; height: 11px; flex: none; display: block; border-bottom: 1px solid #aaa; }
.cd-rest { flex: 1; min-height: 0; display: flex; }
.ruler-v { width: 11px; height: 100%; flex: none; border-right: 1px solid #aaa; }
#rulerH text, #rulerV text { font: 5px "Noto Sans", "Noto Sans CJK SC", sans-serif; fill: #111; text-anchor: middle; }
.cd-canvas { flex: 1; background: #fff; position: relative; overflow: hidden; }
.page { position: absolute; left: 711px; top: 75px; width: 184px; height: 120px; border: 1px solid #bbb; box-shadow: 3px 3px 0 #aaa; background: #fff; }
.stub { position: absolute; left: 588px; top: 82px; width: 1px; height: 6px; background: #ccc; }
.cd-scroll { width: 8px; display: flex; flex-direction: column; justify-content: space-between; align-items: center; }
.cd-scroll i { width: 7px; height: 8px; background: #ccc; }
.palette { width: 13px; flex: none; display: flex; flex-direction: column; align-items: center; padding-top: 5px; overflow: hidden; }
.palette svg { width: 9px; height: 9px; flex: none; }
.palette i { width: 9px; height: 9px; flex: none; border-bottom: 1px solid #222; }
.pal-play { width: 7px; height: 8px; border: 1px solid #888; border-radius: 50%; line-height: 6px; text-align: center; flex: none; font-size: 5px; }
.pal-up { height: 9px; color: #999; flex: none; }
.k1 { background: #1c1a18; } .k2 { background: #33302e; } .k3 { background: #474543; } .k4 { background: #5c5a58; } .k5 { background: #70706f; } .k6 { background: #868686; } .k7 { background: #9b9b9b; } .k8 { background: #b0b0b0; }
.popup { position: absolute; right: 82px; top: 18px; width: 78px; height: 16px; background: #fff; border: 1px solid #4aa0e0; box-shadow: 0 3px 8px #0005; display: flex; align-items: center; justify-content: space-between; padding: 0 8px 0 4px; }
.popup svg { width: 16px; height: 9px; }
.popup button svg { width: 8px; height: 8px; }
.meter-b { right: 4px; top: 41px; }
.meter-b .meter-rate { padding-left: 5px; }
.meter-b .meter-rate i { width: 10px; }

.marks { position: absolute; inset: 0; width: 100%; height: 100%; pointer-events: none; fill: #000; fill-opacity: .035; stroke: #aaa; stroke-opacity: .16; stroke-width: 1; }
#mark text { font: 700 35px "Noto Sans CJK SC", sans-serif; text-anchor: middle; }
```
FILE: app.js
```js
const NS = "http://www.w3.org/2000/svg";

function add(parent, name, attrs, text) {
  const node = document.createElementNS(NS, name);
  for (const key in attrs) node.setAttribute(key, attrs[key]);
  if (text !== undefined) node.textContent = text;
  parent.appendChild(node);
}

const STEP = 43.56;

// Horizontal ruler: zero sits 722px from its left edge.
const h = document.getElementById("rulerH");
let d = "";
for (let n = -164; n <= 62; n++) {
  const x = 722 + n * STEP / 10;
  d += `M${x.toFixed(1)} ${n % 10 === 0 ? 6 : 9}V11`;
}
add(h, "path", { d, stroke: "#333", "stroke-width": 0.8 });
for (let n = -16; n <= 5; n++) {
  add(h, "text", { x: 722 + n * STEP, y: 5 }, Math.abs(n * 50));
}
add(h, "text", { x: 989, y: 5 }, "毫米");
add(h, "path", { d: "M4 3l6 6M4 7h4M7 3v4", stroke: "#555", fill: "none", "stroke-dasharray": "2 1" });

// Vertical ruler
const v = document.getElementById("rulerV");
d = "";
for (let n = -6; n <= 40; n++) {
  const y = 29 + n * STEP / 10;
  d += `M${n % 10 === 0 ? 5 : 9} ${y.toFixed(1)}H11`;
}
add(v, "path", { d, stroke: "#333", "stroke-width": 0.8 });
[350, 300].forEach((value, k) => {
  const y = 29 + k * STEP;
  add(v, "text", { transform: `translate(6 ${y}) rotate(-90)` }, value);
});

const marks = document.getElementById("marks");
for (let row = 0; row < 6; row++) {
  for (let col = 0; col < 2; col++) {
    add(marks, "use", { href: "#mark", x: col * 436, y: row * 131 });
  }
}
```
